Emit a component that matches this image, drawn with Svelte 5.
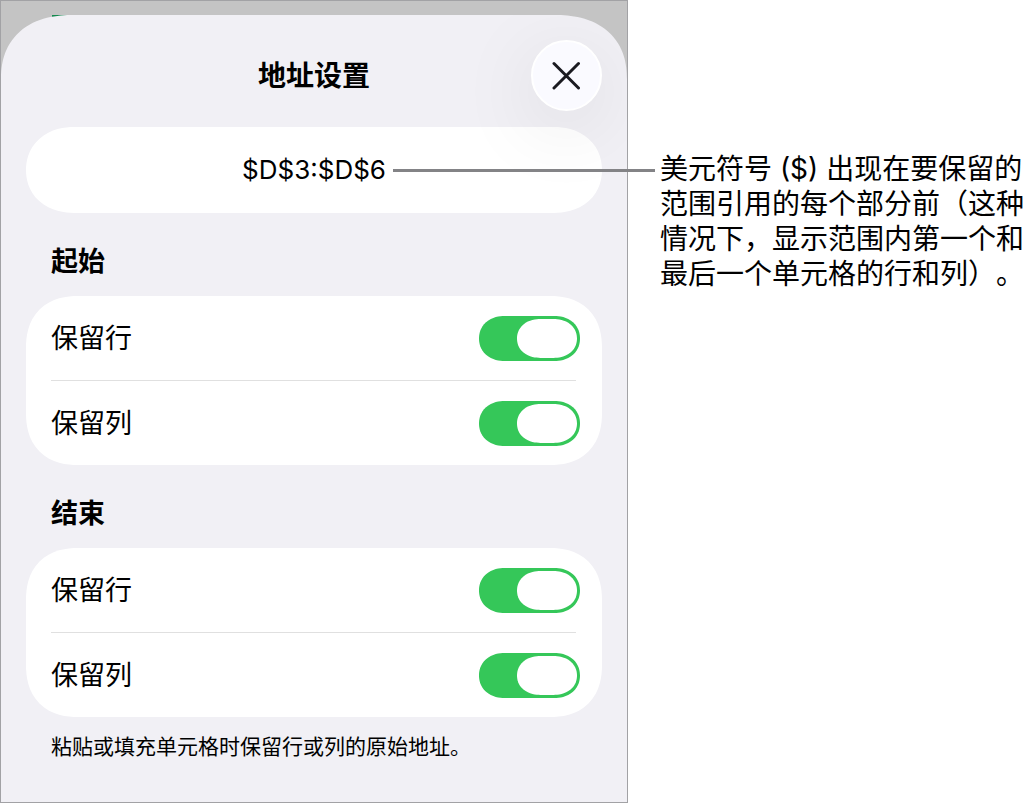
<script>
  let sections = $state([
    { id: 'start', title: '起始', row: true, column: true },
    { id: 'end', title: '结束', row: true, column: true }
  ]);

  const reference = $derived(
    sections.map((s) => `${s.column ? '$' : ''}D${s.row ? '$' : ''}${s.id === 'start' ? 3 : 6}`).join(':')
  );
</script>

<main class="page">
  <div class="device">
    <span class="app-behind" aria-hidden="true"></span>
    <div class="sheet">
      <header class="bar">
        <h1>地址设置</h1>
        <button class="close" type="button" aria-label="关闭">
          <svg viewBox="0 0 29 29" width="29" height="29" aria-hidden="true">
            <path d="M2 2.5 26.5 27M26.5 2.5 2 27" />
          </svg>
        </button>
      </header>

      <div class="field">
        <output class="value">{reference}</output>
      </div>

      {#each sections as section (section.id)}
        <section>
          <h2>{section.title}</h2>
          <div class="card">
            <label class="row">
              <span>保留行</span>
              <input type="checkbox" role="switch" bind:checked={section.row} />
            </label>
            <hr />
            <label class="row">
              <span>保留列</span>
              <input type="checkbox" role="switch" bind:checked={section.column} />
            </label>
          </div>
        </section>
      {/each}

      <p class="hint">粘贴或填充单元格时保留行或列的原始地址。</p>
    </div>
  </div>

  <aside class="callout">
    <p>美元符号 ($) 出现在要保留的范围引用的每个部分前（这种情况下，显示范围内第一个和最后一个单元格的行和列）。</p>
  </aside>
</main>

<style>
  :global(body) {
    margin: 0;
    background: #fff;
  }

  .page {
    display: grid;
    grid-template-columns: minmax(0, 628fr) minmax(0, 407fr);
    align-items: stretch;
    min-height: 100vh;
    color: #000;
    font-family: Inter, 'Noto Sans CJK SC', sans-serif;
    font-size: 27px;
    line-height: 36px;
    text-spacing-trim: space-all;
  }

  h1,
  h2,
  p {
    margin: 0;
  }

  .device {
    position: relative;
    display: flex;
    flex-direction: column;
    box-sizing: border-box;
    padding-top: 14px;
    border: 1px solid #a2a2a5;
    background: #c4c4c4;
  }

  .app-behind {
    position: absolute;
    top: 14px;
    left: 51px;
    width: 16px;
    height: 8px;
    background: #168a50;
  }

  .sheet {
    position: relative;
    flex: 1;
    padding: 0 25px 36px;
    overflow: hidden;
    border-radius: 72px 72px 0 0 / 64px 64px 0 0;
    corner-shape: superellipse(1.2);
    background: #f1f0f5;
  }

  .bar {
    display: grid;
    grid-template-columns: 71px 1fr 71px;
    align-items: center;
    padding: 25px 0 16px;
  }

  h1 {
    grid-column: 2;
    font-size: 28px;
    font-weight: 600;
    text-align: center;
  }

  .close {
    position: relative;
    z-index: 1;
    display: grid;
    place-items: center;
    box-sizing: border-box;
    width: 71px;
    height: 71px;
    padding: 0;
    border: 2px solid #fff;
    border-radius: 50%;
    background: #fafaff;
    box-shadow: 0 16px 80px rgba(0, 0, 0, 0.1);
  }

  .close path {
    fill: none;
    stroke: #1a1a20;
    stroke-width: 3;
    stroke-linecap: round;
  }

  .field {
    display: flex;
    align-items: center;
    justify-content: center;
    height: 86px;
    border-radius: 48px / 43px;
    corner-shape: superellipse(1.1);
    background: #fff;
  }

  .value {
    font-size: 26px;
  }

  h2 {
    padding: 31px 25px 16px;
    font-size: 27px;
    font-weight: 600;
  }

  .card {
    border-radius: 52px;
    corner-shape: superellipse(1.2);
    background: #fff;
  }

  .row {
    display: flex;
    align-items: center;
    justify-content: space-between;
    height: 84px;
    padding: 0 22px 0 25px;
  }

  .row span {
    padding-top: 2px;
  }

  hr {
    height: 1px;
    margin: 0 26px 0 25px;
    border: 0;
    background: #e0e0e0;
  }

  .row input {
    appearance: none;
    box-sizing: border-box;
    width: 101px;
    height: 45px;
    margin: 0;
    padding: 3px;
    border-radius: 26px / 23px;
    corner-shape: superellipse(1.1);
    background: #d8d8dc;
  }

  .row input::before {
    content: '';
    display: block;
    width: 60px;
    height: 39px;
    border-radius: 24px / 20px;
    corner-shape: superellipse(1.1);
    background: #fff;
  }

  .row input:checked {
    background: #35c759;
  }

  .row input:checked::before {
    margin-left: auto;
  }

  .hint {
    padding: 14px 25px 0;
    font-size: 21px;
    line-height: 32px;
  }

  .callout {
    padding: 152px 8px 0 32px;
    font-size: 28px;
    line-height: 35px;
  }

  .callout p {
    position: relative;
  }

  /* Leader line from the explanation back to the reference */
  .callout p::before {
    content: '';
    position: absolute;
    top: 17px;
    right: calc(100% + 5px);
    z-index: 2;
    width: 262px;
    height: 3px;
    background: #838386;
  }
</style>
